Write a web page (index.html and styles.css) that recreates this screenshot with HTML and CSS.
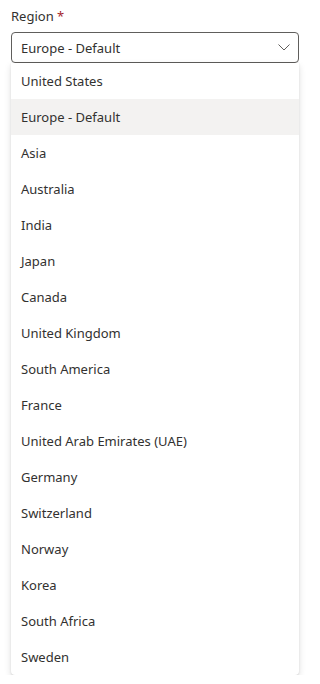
FILE: index.html
```html
<!DOCTYPE html>
<html>
<head>
<meta charset="utf-8">
<link rel="stylesheet" href="styles.css">
</head>
<body>
<div class="field">
  <div class="label">Region <span class="req">*</span></div>
  <div class="select">
    <span class="value">Europe - Default</span>
    <svg class="chev" width="12" height="7" viewBox="0 0 12 7"><path d="M0.5 0.5 L6 6 L11.5 0.5" fill="none" stroke="#605e5c" stroke-width="1"/></svg>
  </div>
  <ul class="list">
    <li class="opt">United States</li>
    <li class="opt selected">Europe - Default</li>
    <li class="opt">Asia</li>
    <li class="opt">Australia</li>
    <li class="opt">India</li>
    <li class="opt">Japan</li>
    <li class="opt">Canada</li>
    <li class="opt">United Kingdom</li>
    <li class="opt">South America</li>
    <li class="opt">France</li>
    <li class="opt">United Arab Emirates (UAE)</li>
    <li class="opt">Germany</li>
    <li class="opt">Switzerland</li>
    <li class="opt">Norway</li>
    <li class="opt">Korea</li>
    <li class="opt">South Africa</li>
    <li class="opt">Sweden</li>
  </ul>
</div>
</body>
</html>
```
FILE: styles.css
```css
html, body {
  margin: 0;
  padding: 0;
  background: #ffffff;
}
body {
  font-family: "Noto Sans", "Open Sans", sans-serif;
  font-size: 13px;
  color: #323130;
}
.field {
  width: 288px;
  padding: 6px 0 0 11px;
}
.label {
  height: 20px;
  line-height: 20px;
  margin-bottom: 6px;
  color: #323130;
}
.req {
  color: #a4262c;
}
.select {
  box-sizing: border-box;
  height: 31px;
  border: 1px solid #605e5c;
  border-radius: 4px;
  display: flex;
  align-items: center;
  justify-content: space-between;
  padding: 0 8px 0 9px;
}
.value {
  line-height: 20px;
}
.chev {
  display: block;
}
.list {
  list-style: none;
  margin: 0;
  padding: 0;
  background: #ffffff;
  border-radius: 0 0 4px 4px;
  box-shadow: 0 3px 7px rgba(0,0,0,0.13), 0 0.6px 1.8px rgba(0,0,0,0.11);
}
.opt {
  height: 36px;
  line-height: 36px;
  padding: 0 10px;
}
.opt.selected {
  background: #f3f2f1;
}
```
